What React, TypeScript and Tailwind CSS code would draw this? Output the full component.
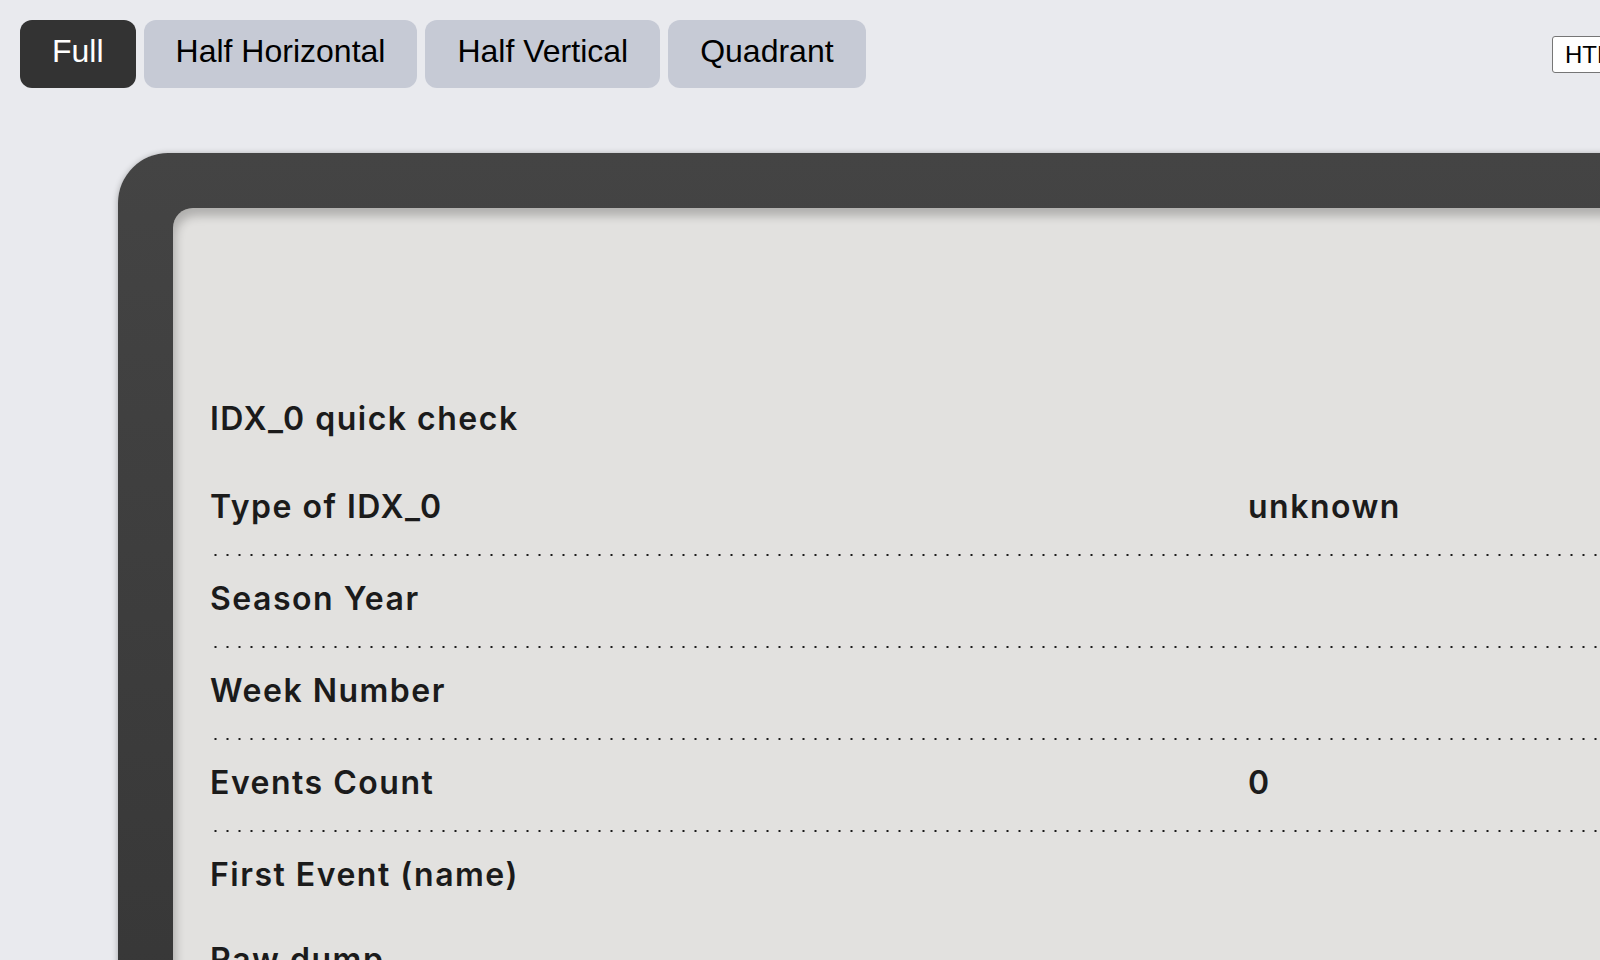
import React from "react";

const layouts = ["Full", "Half Horizontal", "Half Vertical", "Quadrant"];

const rows = [
  { label: "Type of IDX_0", value: "unknown" },
  { label: "Season Year", value: "" },
  { label: "Week Number", value: "" },
  { label: "Events Count", value: "0" },
  { label: "First Event (name)", value: "", last: true },
];

export default function App() {
  return (
    <div className="w-[1600px] h-[960px] overflow-hidden bg-[#e9eaee] font-['Liberation_Sans',Arial,sans-serif]">
      {/* Toolbar */}
      <div className="w-[1692px] flex items-center pl-5 pt-5">
        <div className="flex gap-2">
          {layouts.map((l, i) => (
            <button
              key={l}
              className={
                i === 0
                  ? "px-8 pt-[13px] pb-[19px] rounded-xl text-[32px] leading-[36px] bg-[#333333] text-white"
                  : "px-8 pt-[13px] pb-[19px] rounded-xl text-[32px] leading-[36px] bg-[#c6cad5] text-black"
              }
            >
              {l}
            </button>
          ))}
        </div>
        <select className="ml-auto w-[140px] h-[37px] px-2 text-[24px] bg-white text-black border border-[#767676] rounded-[3px]">
          <option>HTML</option>
        </select>
      </div>

      {/* Device frame */}
      <div className="ml-[118px] mt-[65px] w-[1560px] h-[1000px] rounded-[50px] bg-gradient-to-b from-[#444444] to-[#353535] p-[55px] shadow-[0_1px_6px_rgba(0,0,0,0.3)]">
        <div className="h-full rounded-[20px] bg-[#e2e1df] shadow-[inset_3px_8px_10px_rgba(0,0,0,0.22)] pl-[37px] pt-[168px] text-[#1b1b1b] font-['Inter',sans-serif] font-semibold text-[32px] tracking-[1.5px]">
          <h2 className="leading-[46px] pt-5 pb-6">IDX_0 quick check</h2>
          <div>
            {rows.map((r) => (
              <div
                key={r.label}
                className={
                  r.last
                    ? "grid grid-cols-[1038px_1fr] pt-[18px] pb-[26px] leading-[46px]"
                    : "grid grid-cols-[1038px_1fr] pt-[18px] pb-[26px] leading-[46px] border-b-2 border-transparent bg-[linear-gradient(to_right,#1b1b1b_2px,transparent_2px)] bg-[length:12px_2px] bg-repeat-x bg-bottom"
                }
              >
                <span>{r.label}</span>
                <span>{r.value}</span>
              </div>
            ))}
          </div>
          <h2 className="leading-[46px] pt-[13px] pb-5">Raw dump</h2>
        </div>
      </div>
    </div>
  );
}
